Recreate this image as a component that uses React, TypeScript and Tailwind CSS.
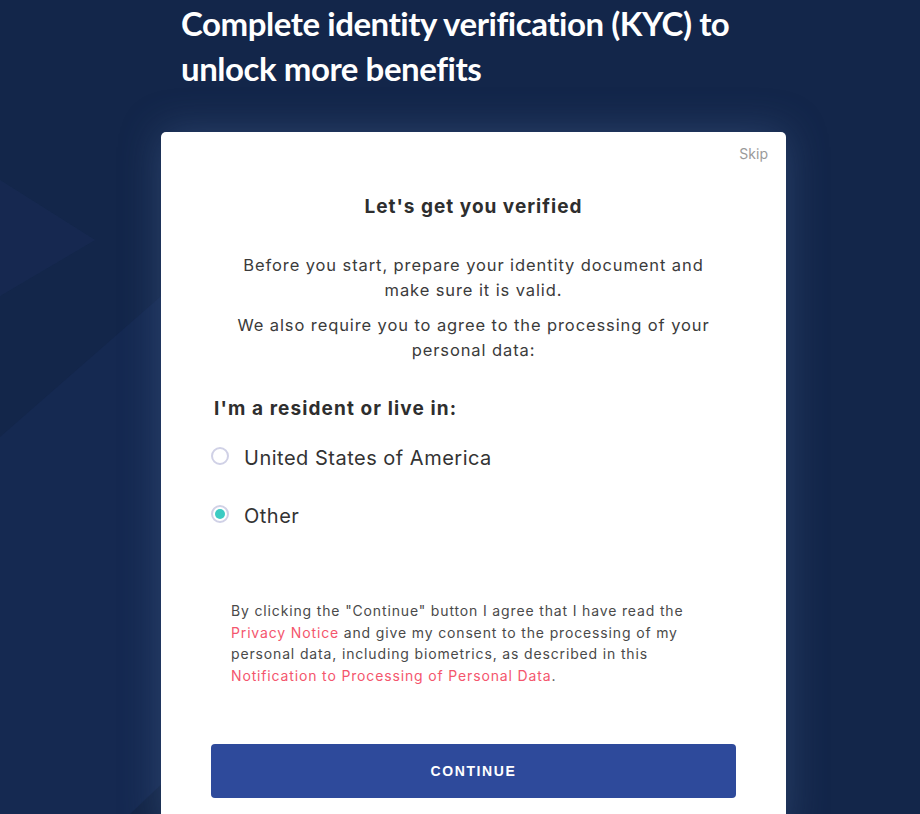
import React, { useState } from 'react';

const options = ['United States of America', 'Other'];

const Radio: React.FC<{ checked: boolean }> = ({ checked }) => (
  <span className="flex h-[18px] w-[18px] shrink-0 items-center justify-center rounded-full border-2 border-[#d0d1e6] bg-white">
    {checked && <span className="h-[10px] w-[10px] rounded-full bg-[#3ccbc2]" />}
  </span>
);

const App: React.FC = () => {
  const [country, setCountry] = useState('Other');

  return (
    <div className="relative h-[814px] overflow-hidden bg-[#13264a] font-['Inter',sans-serif]">
      {/* background shapes */}
      <svg className="absolute inset-0 h-full w-full" viewBox="0 0 920 814" preserveAspectRatio="none">
        <polygon points="0,180 95,240 0,296" fill="#1a2d58" opacity="0.45" />
        <polygon points="0,437 160,297 300,180 300,814 0,814" fill="#182c57" opacity="0.5" />
        <polygon points="130,814 250,700 250,814" fill="#10213f" opacity="0.6" />
      </svg>

      <div className="relative ml-[161px] w-[625px]">
        <h1 className="pl-5 pt-[1px] font-['Lato',sans-serif] text-[33px] font-bold leading-[45px] tracking-[-0.45px] text-white">
          Complete identity verification (KYC) to
          <br />
          unlock more benefits
        </h1>

        <div className="mt-[41px] h-[700px] rounded-[5px] bg-white px-[50px] pt-3 shadow-[0_0_40px_rgba(90,120,170,0.35)]">
          <div className="-mr-8 flex justify-end">
            <button className="text-[14px] leading-5 text-[#9a9a9a]">Skip</button>
          </div>

          <h2 className="mt-[31px] text-center text-[19px] font-bold leading-6 tracking-[1px] text-[#2e2e2e]">
            Let's get you verified
          </h2>

          <p className="mx-auto mt-[34px] w-[490px] text-center text-[16.5px] leading-[25px] tracking-[0.9px] text-[#3b3b3b]">
            Before you start, prepare your identity document and make sure it is valid.
          </p>
          <p className="mx-auto mt-[10px] w-[490px] text-center text-[16.5px] leading-[25px] tracking-[0.9px] text-[#3b3b3b]">
            We also require you to agree to the processing of your personal data:
          </p>

          <h3 className="mt-[34px] pl-[3px] text-[19px] font-bold leading-6 tracking-[1.1px] text-[#2e2e2e]">
            I'm a resident or live in:
          </h3>

          <div className="mt-5 flex flex-col gap-7">
            {options.map((o) => (
              <label key={o} className="flex h-[30px] cursor-pointer items-center gap-[15px]" onClick={() => setCountry(o)}>
                <Radio checked={country === o} />
                <span className="pt-1 text-[20px] leading-[26px] tracking-[0.5px] text-[#333]">{o}</span>
              </label>
            ))}
          </div>

          <p className="mt-[71px] px-5 text-[14px] leading-[21.5px] tracking-[0.85px] text-[#4a4a4a]">
            By clicking the "Continue" button I agree that I have read the{' '}
            <a className="text-[#f4566d]">Privacy Notice</a> and give my consent to the processing of my
            personal data, including biometrics, as described in this{' '}
            <a className="text-[#f4566d]">Notification to Processing of Personal Data</a>.
          </p>

          <button className="mt-[58px] h-[54px] w-full rounded-[4px] bg-[#2e4a9b] font-['Liberation_Sans',sans-serif] text-[14px] font-bold tracking-[1.6px] text-white">
            CONTINUE
          </button>
        </div>
      </div>
    </div>
  );
};

export default App;
